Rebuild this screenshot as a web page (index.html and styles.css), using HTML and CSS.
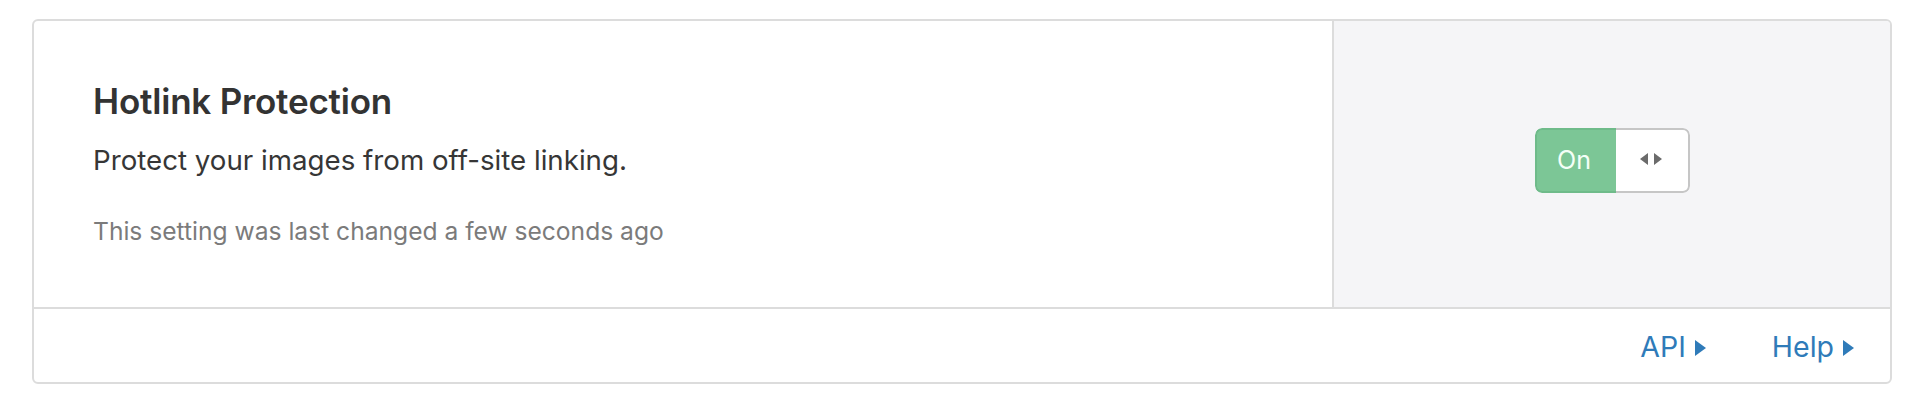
FILE: index.html
```html
<!DOCTYPE html>
<html lang="en">
<head>
<meta charset="utf-8">
<title>Hotlink Protection</title>
<link rel="stylesheet" href="styles.css">
</head>
<body>
<div class="page">
  <section class="card">
    <div class="card-body">
      <div class="info">
        <h3 class="title">Hotlink Protection</h3>
        <p class="desc">Protect your images from off-site linking.</p>
        <p class="note">This setting was last changed a few seconds ago</p>
      </div>
      <div class="control">
        <div class="toggle">
          <span class="toggle-on">On</span>
          <span class="toggle-handle">
            <svg width="22" height="12" viewBox="0 0 22 12" aria-hidden="true"><path d="M0 6 L8 0 L8 12 Z M14 0 L22 6 L14 12 Z" fill="#6b6b6b"/></svg>
          </span>
        </div>
      </div>
    </div>
    <div class="card-footer">
      <a class="link" href="#">API<svg class="caret" width="11" height="16" viewBox="0 0 11 16" aria-hidden="true"><path d="M0 0 L11 8 L0 16 Z" fill="currentColor"/></svg></a>
      <a class="link" href="#">Help<svg class="caret" width="11" height="16" viewBox="0 0 11 16" aria-hidden="true"><path d="M0 0 L11 8 L0 16 Z" fill="currentColor"/></svg></a>
    </div>
  </section>
</div>
</body>
</html>
```
FILE: styles.css
```css
* { box-sizing: border-box; }
html, body { margin: 0; padding: 0; background: #ffffff; }
body { font-family: Inter, "Noto Sans", "Liberation Sans", sans-serif; }

.page { padding: 19px 28px 20px 32px; }

.card {
  border: 2px solid #dcdcdc;
  border-radius: 6px;
  overflow: hidden;
  background: #fff;
}

.card-body {
  display: flex;
  border-bottom: 2px solid #dcdcdc;
}

.info {
  width: 1300px;
  flex: none;
  padding: 60px 58px 61px 59px;
  border-right: 2px solid #dcdcdc;
}

.title {
  margin: 0;
  font-size: 35px;
  line-height: 40px;
  font-weight: 600;
  color: #333333;
  letter-spacing: -0.2px;
}

.desc {
  margin: 21px 0 0;
  font-size: 27.7px;
  line-height: 36px;
  color: #363636;
}

.note {
  margin: 38px 0 0;
  font-size: 24.6px;
  line-height: 30px;
  color: #7b7b7b;
}

.control {
  flex: 1;
  background: #f5f5f7;
  display: flex;
  align-items: center;
  justify-content: center;
}

.toggle {
  display: flex;
  width: 155px;
  height: 65px;
  margin-top: -8px;
  border-radius: 7px;
  overflow: hidden;
}

.toggle-on {
  width: 81px;
  background: #7cc696;
  border: 2px solid #6fbb8a;
  border-right: none;
  border-radius: 7px 0 0 7px;
  color: #f4fff7;
  font-size: 25px;
  display: flex;
  align-items: center;
  justify-content: center;
  padding-right: 4px;
}

.toggle-handle {
  flex: 1;
  background: #ffffff;
  border: 2px solid #c6c6c6;
  border-left: none;
  border-radius: 0 7px 7px 0;
  display: flex;
  align-items: center;
  justify-content: center;
  padding-right: 2px;
  padding-bottom: 2px;
}

.card-footer {
  display: flex;
  justify-content: flex-end;
  gap: 66px;
  padding: 20px 36px 17px 0;
}

.link {
  display: flex;
  align-items: center;
  gap: 9px;
  font-size: 28.5px;
  line-height: 36px;
  color: #2f7bb9;
  text-decoration: none;
}

.caret { margin-top: 2px; }
```
